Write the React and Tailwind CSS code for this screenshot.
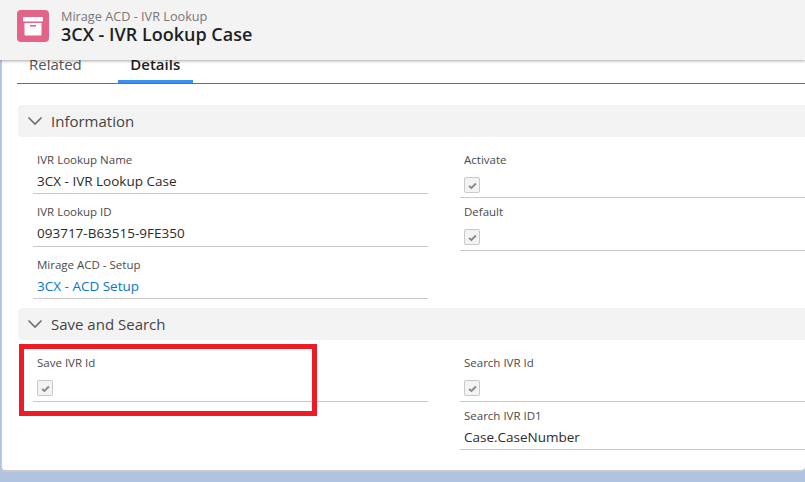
const font = { fontFamily: '"Open Sans", "Noto Sans", sans-serif' };

const Chevron = () => (
  <svg width="16" height="16" viewBox="0 0 16 16" fill="none" stroke="#706e6b" strokeWidth="1.6">
    <path d="M1.5 4.5 L8 11 L14.5 4.5" />
  </svg>
);

const Check = () => (
  <div className="flex h-[16px] w-[16px] items-center justify-center rounded-[2px] border border-[#c9c9c9] bg-[#f3f3f3]">
    <svg width="9" height="9" viewBox="0 0 10 10" fill="none" stroke="#8a8a8a" strokeWidth="2.2">
      <path d="M1.2 5.6 L3.8 7.8 L8.8 2.8" />
    </svg>
  </div>
);

const TextField = ({ label, value, link, className }) => (
  <div className={`flex flex-col border-b border-[#c9c9c9] px-[4px] ${className}`}>
    <div className="h-[18px] pt-[1px] text-[11.5px] leading-[16px] text-[#4a4a4a]">{label}</div>
    <div className={`mt-[2px] text-[13.5px] leading-[20px] ${link ? "text-[#0a76c9]" : "text-[#2b2b2b]"}`}>
      {value}
    </div>
  </div>
);

const CheckField = ({ label, className }) => (
  <div className={`flex flex-col border-b border-[#c9c9c9] px-[4px] ${className}`}>
    <div className="h-[18px] pt-[1px] text-[11.5px] leading-[16px] text-[#4a4a4a]">{label}</div>
    <div className="mt-[8px]">
      <Check />
    </div>
  </div>
);

const SectionHeader = ({ title }) => (
  <div className="flex h-[32px] items-center gap-[8px] rounded-l-[4px] bg-[#f3f3f3] pl-[9px]">
    <Chevron />
    <span className="text-[15px] text-[#444444]">{title}</span>
  </div>
);

export default function App() {
  return (
    <div style={font} className="flex h-[482px] w-[805px] flex-col overflow-hidden bg-[#b0c4df]">
      <div className="relative z-10 flex h-[60px] shrink-0 items-center gap-[12px] bg-[#f3f3f3] pb-[8px] pl-[17px] shadow-[0_1px_3px_rgba(0,0,0,0.35)]">
        <div className="flex h-[32px] w-[32px] items-center justify-center rounded-[4px] bg-[#e36488]">
          <svg width="20" height="20" viewBox="0 0 20 20" fill="#ffffff">
            <rect x="0" y="1" width="20" height="4.5" rx="0.8" />
            <path d="M1.5 7 H18.5 V18.5 a1 1 0 0 1 -1 1 H2.5 a1 1 0 0 1 -1 -1 Z" />
            <rect x="7" y="9" width="6" height="1.6" fill="#e36488" />
          </svg>
        </div>
        <div className="flex flex-col">
          <span className="text-[12.7px] leading-[16px] text-[#777777]">Mirage ACD - IVR Lookup</span>
          <span className="text-[18px] font-semibold leading-[20px] text-[#1f1f1f]">3CX - IVR Lookup Case</span>
        </div>
      </div>

      <div className="ml-[1px] flex h-[410px] shrink-0 flex-col rounded-b-[4px] border-l border-[#c9c9c9] bg-white pl-[16px] shadow-[0_2px_0_#c9c9c9]">
        <div className="-ml-[1px] flex h-[24px] shrink-0 items-end overflow-hidden border-b border-[#706e6b]">
          <span className="mb-[9px] ml-[12px] text-[15px] leading-[20px] text-[#555555]">Related</span>
          <span className="ml-[36px] flex h-[24px] w-[75px] items-end justify-center border-b-[3px] border-[#3b8fef] text-[15px] font-semibold leading-[20px] text-[#1f1f1f]">
            <span className="mb-[6px]">Details</span>
          </span>
        </div>

        <div className="mt-[21px]">
          <SectionHeader title="Information" />
        </div>

        <div className="mt-[14px] grid grid-cols-[395px_345px] gap-x-[32px] pl-[15px]">
          <div className="flex flex-col">
            <TextField label="IVR Lookup Name" value="3CX - IVR Lookup Case" className="mb-[9px] h-[43px]" />
            <TextField label="IVR Lookup ID" value="093717-B63515-9FE350" className="mb-[9px] h-[44px]" />
            <TextField label="Mirage ACD - Setup" value="3CX - ACD Setup" link className="h-[43px]" />
          </div>
          <div className="flex flex-col">
            <CheckField label="Activate" className="mb-[5px] h-[47px]" />
            <CheckField label="Default" className="h-[48px]" />
          </div>
        </div>

        <div className="mt-[9px]">
          <SectionHeader title="Save and Search" />
        </div>

        <div className="relative mt-[14px] grid grid-cols-[395px_345px] gap-x-[32px] pl-[15px]">
          <div>
            <CheckField label="Save IVR Id" className="h-[48px]" />
          </div>
          <div className="flex flex-col">
            <CheckField label="Search IVR Id" className="mb-[5px] h-[48px]" />
            <TextField label="Search IVR ID1" value="Case.CaseNumber" className="h-[43px]" />
          </div>
          <div className="absolute left-[1px] top-[-10px] h-[72px] w-[298px] border-[5px] border-[#ed1c24]" />
        </div>
      </div>
    </div>
  );
}
